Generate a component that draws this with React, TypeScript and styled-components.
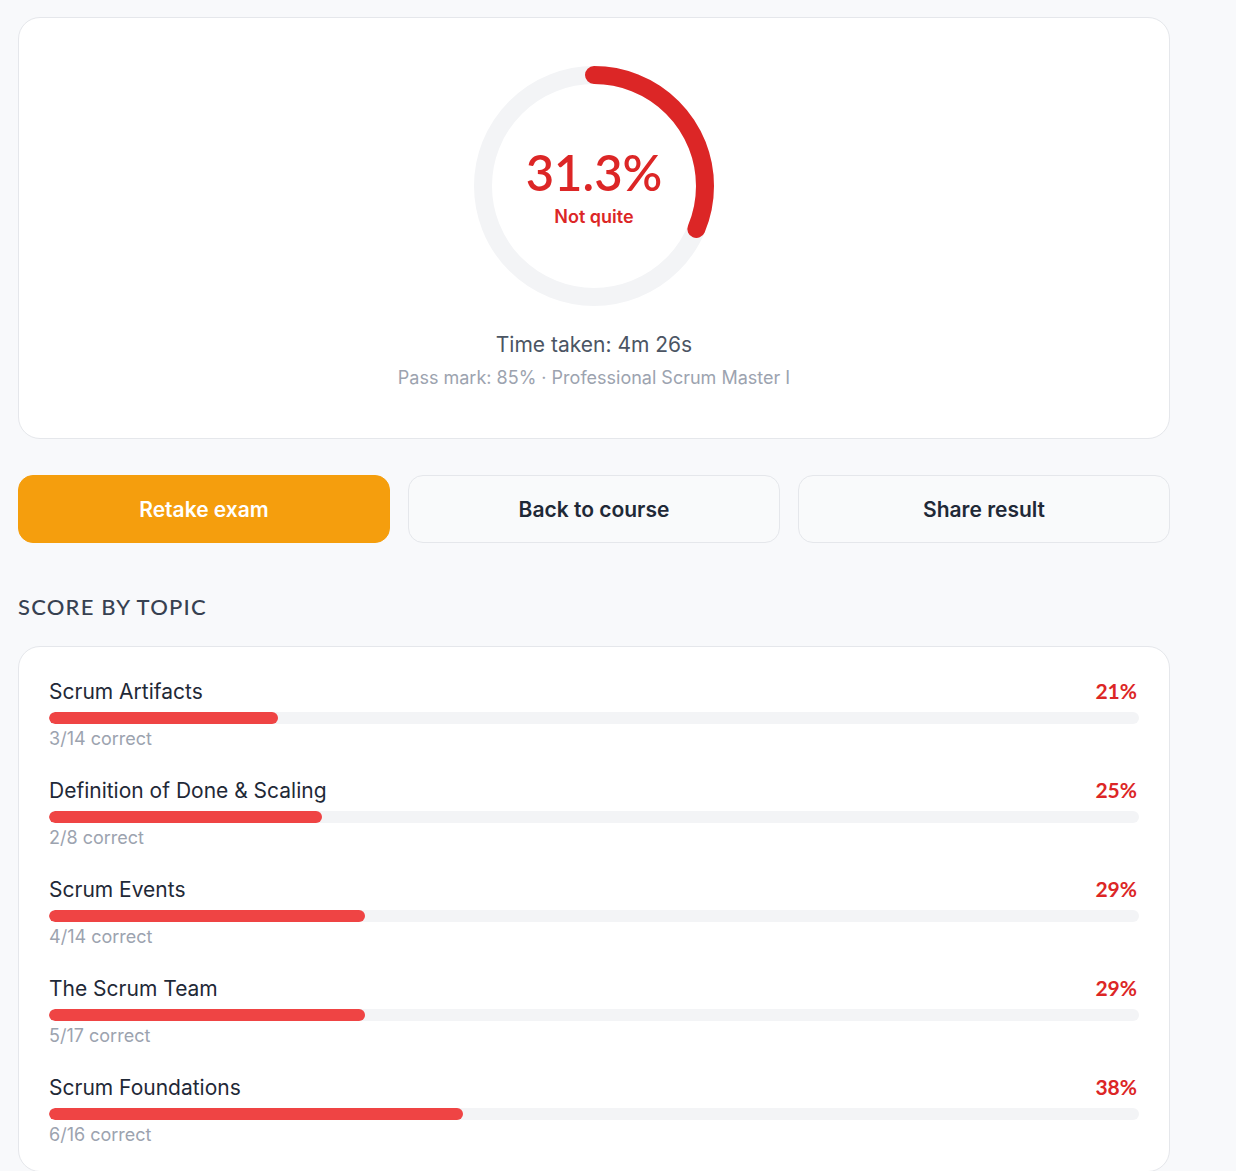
import React from 'react';
import styled, { createGlobalStyle } from 'styled-components';

const GlobalStyle = createGlobalStyle`
  body {
    margin: 0;
    background: #f8f9fb;
    font-family: Inter, "Liberation Sans", sans-serif;
  }
`;

const topics = [
  { name: 'Scrum Artifacts', correct: 3, total: 14 },
  { name: 'Definition of Done & Scaling', correct: 2, total: 8 },
  { name: 'Scrum Events', correct: 4, total: 14 },
  { name: 'The Scrum Team', correct: 5, total: 17 },
  { name: 'Scrum Foundations', correct: 6, total: 16 },
];

const Page = styled.div`
  width: 1152px;
  padding: 17px 0 0 18px;
`;

const Card = styled.section`
  background: #fff;
  border: 1px solid #e5e7eb;
  border-radius: 22px;
`;

const ResultCard = styled(Card)`
  display: flex;
  flex-direction: column;
  align-items: center;
  padding: 48px 0 47px;
`;

const Ring = styled.div`
  position: relative;
  width: 240px;
  height: 240px;
`;

const RingLabel = styled.div`
  position: absolute;
  inset: 0;
  display: flex;
  flex-direction: column;
  align-items: center;
  justify-content: center;
  padding-top: 1px;
`;

const Score = styled.div`
  font-family: Lato, "Noto Sans", sans-serif;
  font-weight: 600;
  font-size: 49px;
  line-height: 56px;
  color: #dc2626;
`;

const Verdict = styled.div`
  font-size: 18px;
  line-height: 24px;
  font-weight: 600;
  color: #dc2626;
  margin-top: 5px;
`;

const TimeTaken = styled.div`
  margin-top: 25px;
  font-size: 21px;
  line-height: 28px;
  color: #4b5563;
`;

const PassMark = styled.div`
  margin-top: 6px;
  font-size: 18px;
  line-height: 26px;
  color: #9ca3af;
`;

const Actions = styled.div`
  display: grid;
  grid-template-columns: repeat(3, 1fr);
  gap: 18px;
  margin-top: 36px;
`;

const Button = styled.button<{ $primary?: boolean }>`
  height: 68px;
  border-radius: 15px;
  font-family: Inter, "Liberation Sans", sans-serif;
  font-size: 21px;
  font-weight: 600;
  cursor: pointer;
  border: 1px solid ${({ $primary }) => ($primary ? '#f59e0b' : '#e5e7eb')};
  background: ${({ $primary }) => ($primary ? '#f59e0d' : '#f9fafb')};
  color: ${({ $primary }) => ($primary ? '#fff' : '#1f2937')};
`;

const SectionTitle = styled.h2`
  margin: 50px 0 0;
  font-family: Lato, "Noto Sans", sans-serif;
  font-weight: 500;
  font-size: 22px;
  line-height: 28px;
  letter-spacing: 1.2px;
  color: #374151;
`;

const TopicCard = styled(Card)`
  margin-top: 25px;
  padding: 30px 30px 24px;
  display: flex;
  flex-direction: column;
  gap: 25px;
`;

const Row = styled.div`
  display: flex;
  flex-direction: column;
`;

const RowHead = styled.div`
  display: flex;
  justify-content: space-between;
  align-items: center;
  height: 28px;
`;

const TopicName = styled.span`
  font-size: 21px;
  color: #1f2937;
`;

const TopicPct = styled.span`
  font-family: Lato, "Noto Sans", sans-serif;
  font-weight: 700;
  font-size: 21px;
  color: #dc2626;
  padding-right: 2px;
  margin-top: -2px;
`;

const Track = styled.div`
  margin-top: 7px;
  height: 12px;
  border-radius: 6px;
  background: #f3f4f6;
  overflow: hidden;
`;

const Fill = styled.div`
  height: 100%;
  border-radius: 6px;
  background: #ef4444;
`;

const Correct = styled.div`
  margin-top: 3px;
  font-size: 18px;
  line-height: 24px;
  color: #9ca3af;
`;

const ScoreRing = ({ pct }: { pct: number }) => {
  const r = 111;
  const c = 2 * Math.PI * r;
  return (
    <svg width="240" height="240" viewBox="0 0 240 240">
      <circle cx="120" cy="120" r={r} fill="none" stroke="#f3f4f6" strokeWidth="18" />
      <circle
        cx="120"
        cy="120"
        r={r}
        fill="none"
        stroke="#dc2626"
        strokeWidth="18"
        strokeLinecap="round"
        strokeDasharray={`${(c * pct) / 100} ${c}`}
        transform="rotate(-90 120 120)"
      />
    </svg>
  );
};

const App = () => {
  return (
    <Page>
      <GlobalStyle />
      <ResultCard>
        <Ring>
          <ScoreRing pct={31.3} />
          <RingLabel>
            <Score>31.3%</Score>
            <Verdict>Not quite</Verdict>
          </RingLabel>
        </Ring>
        <TimeTaken>Time taken: 4m 26s</TimeTaken>
        <PassMark>Pass mark: 85% · Professional Scrum Master I</PassMark>
      </ResultCard>

      <Actions>
        <Button $primary>Retake exam</Button>
        <Button>Back to course</Button>
        <Button>Share result</Button>
      </Actions>

      <SectionTitle>SCORE BY TOPIC</SectionTitle>
      <TopicCard>
        {topics.map((t) => {
          const pct = Math.round((t.correct / t.total) * 100);
          return (
            <Row key={t.name}>
              <RowHead>
                <TopicName>{t.name}</TopicName>
                <TopicPct>{pct}%</TopicPct>
              </RowHead>
              <Track>
                <Fill style={{ width: `${pct}%` }} />
              </Track>
              <Correct>{t.correct}/{t.total} correct</Correct>
            </Row>
          );
        })}
      </TopicCard>
    </Page>
  );
};

export default App;
